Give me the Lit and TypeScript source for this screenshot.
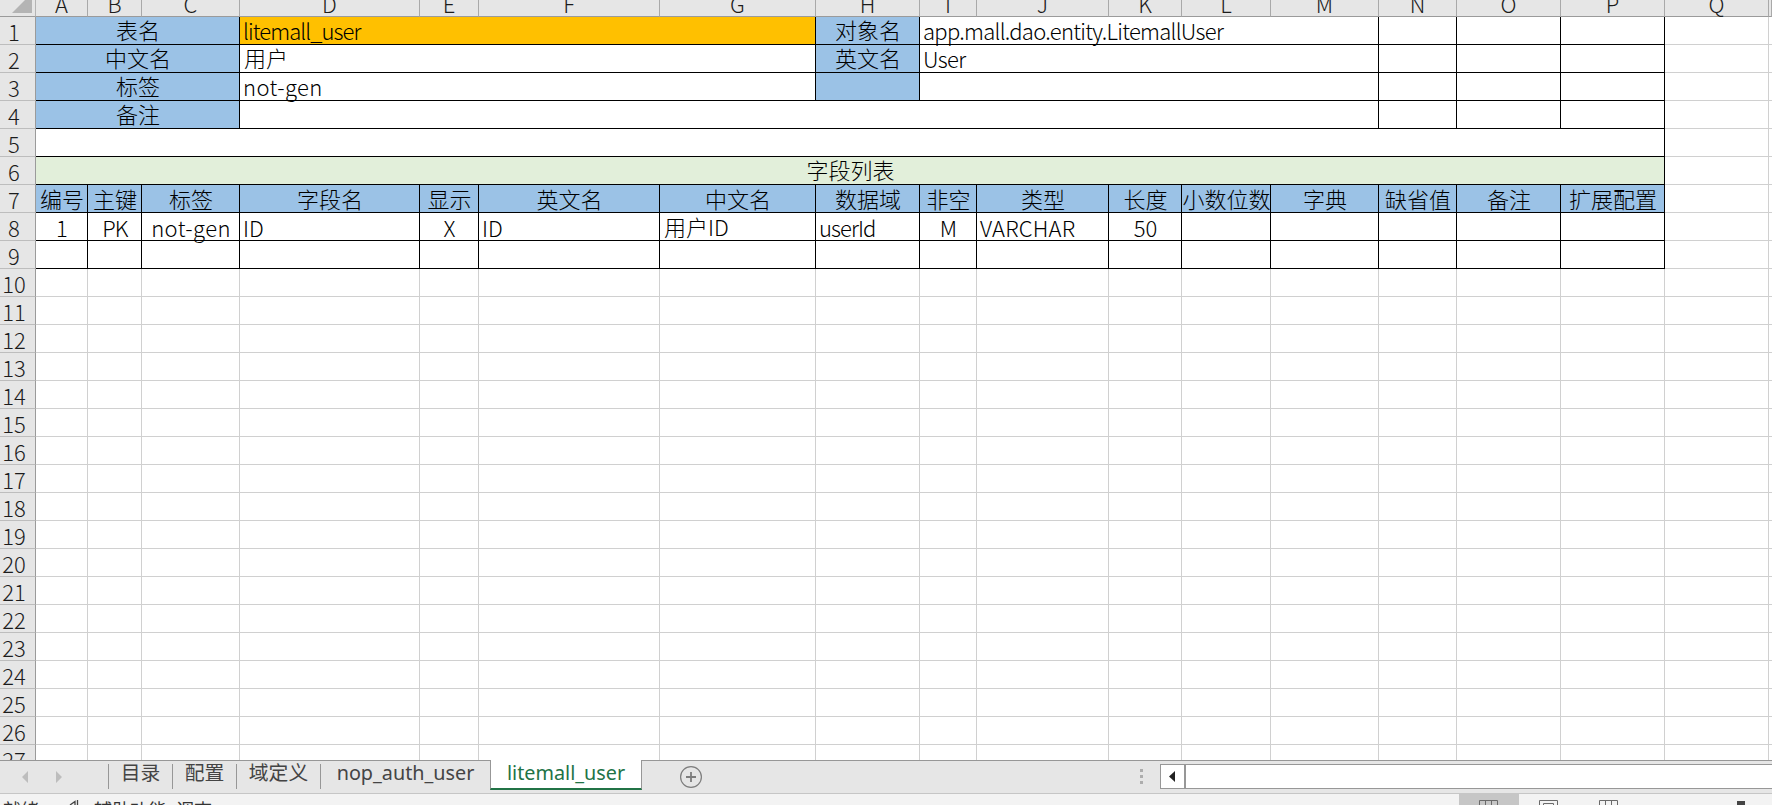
import { LitElement, html, css, nothing } from "lit";
import { customElement } from "lit/decorators.js";

type Cell = { span?: number; text?: string; kind?: string; tone?: string };

const COLS = "ABCDEFGHIJKLMNOPQ".split("");

const label = (text: string, span = 1): Cell => ({ text, span, kind: "blue mid", tone: "han" });
const head = (text: string): Cell => ({ text, kind: "blue mid", tone: "han low" });
const box = (span = 1): Cell => ({ span, kind: "box" });
const plain = (n: number): Cell[] => Array.from({ length: n }, () => ({}));
const boxes = (n: number): Cell[] => Array.from({ length: n }, () => box());
const latin = (text: string, kind: string, span = 1, tone = ""): Cell => ({ text, kind, span, tone: `lat ${tone}` });

const ROWS: Cell[][] = [
  [label("表名", 3), latin("litemall_user", "orange", 4, "up tightest"), label("对象名"), latin("app.mall.dao.entity.LitemallUser", "box", 5, "up tight"), ...boxes(3), ...plain(2)],
  [label("中文名", 3), { text: "用户", span: 4, kind: "box", tone: "han" }, label("英文名"), latin("User", "box", 5, "up tight"), ...boxes(3), ...plain(2)],
  [label("标签", 3), latin("not-gen", "box", 4, "up wide"), label(""), box(5), ...boxes(3), ...plain(2)],
  [label("备注", 3), box(10), ...boxes(3), ...plain(2)],
  [box(16), ...plain(2)],
  [{ text: "字段列表", span: 16, kind: "green mid", tone: "han" }, ...plain(2)],
  [..."编号,主键,标签,字段名,显示,英文名,中文名,数据域,非空,类型,长度,小数位数,字典,缺省值,备注,扩展配置".split(",").map(head), ...plain(2)],
  [
    latin("1", "box mid"), latin("PK", "box mid", 1, "tight"), latin("not-gen", "box mid", 1, "wide"), latin("ID", "box"), latin("X", "box mid"), latin("ID", "box"),
    { text: "用户ID", kind: "box", tone: "han low" }, latin("userId", "box", 1, "snug"), latin("M", "box mid"), latin("VARCHAR", "box", 1, "airy"), latin("50", "box mid"), ...boxes(5), ...plain(2),
  ],
  [...boxes(16), ...plain(2)],
  ...Array.from({ length: 18 }, () => plain(18)),
];

@customElement("sheet-grid")
export class SheetGrid extends LitElement {
  static styles = css`
    :host { display: block; height: 760px; overflow: hidden; background: #fff; }
    .grid {
      display: grid;
      grid-template-columns: 36px 52px 54px 98px 180px 59px 181px 156px 104px 57px 132px 73px 89px 108px 78px 104px 104px 104px 3px;
      grid-template-rows: 17px;
      grid-auto-rows: 28px;
      font: 300 22px/24px "Noto Sans CJK SC", sans-serif;
      color: #000;
    }
    .grid > div { box-sizing: border-box; min-width: 0; white-space: nowrap; }
    .corner, .col { background: #e6e6e6; border-bottom: 1px solid #9b9b9b; }
    .corner { border-right: 1px solid #b4b4b4; display: flex; justify-content: flex-end; padding-right: 3px; }
    .col { border-right: 1px solid #a9a9a9; display: flex; justify-content: center; align-items: flex-end; color: #1c1c1c; }
    .col span { line-height: 24px; margin-bottom: 1px; }
    .num { background: #e6e6e6; border-right: 1px solid #9b9b9b; border-bottom: 1px solid #bdbdbd; padding: 2px 7px 0 0; text-align: center; color: #1c1c1c; }
    .cell { border-right: 1px solid #d0d0d0; border-bottom: 1px solid #d0d0d0; padding-left: 3px; display: flex; align-items: flex-start; }
    .mid { justify-content: center; padding-left: 1px; }
    .box, .blue, .orange, .green { border-color: #000; }
    .blue { background: #9bc2e6; }
    .orange { background: #ffc000; }
    .green { background: #e2efda; }
    .box > .han { padding-left: 1px; }
    .low { padding-top: 1px; }
    .lat { padding-top: 2px; }
    .up { padding-top: 1px; }
    .tight { letter-spacing: -0.72px; }
    .tightest { letter-spacing: -0.9px; }
    .snug { letter-spacing: -0.9px; }
    .airy { letter-spacing: 0.2px; }
    .wide { letter-spacing: 0.4px; }
  `;

  render() {
    return html`<div class="grid">
      <div class="corner"><svg width="20" height="13" viewBox="0 0 20 13"><path d="M20 0V13H0L13 0Z" fill="#b4b4b4" /></svg></div>
      ${COLS.map((c) => html`<div class="col"><span>${c}</span></div>`)}
      <div class="col"></div>
      ${ROWS.map(
        (row, i) => html`<div class="num">${i + 1}</div>
          ${row.map(
            (c) => html`<div class="cell ${c.kind ?? ""}" style=${`grid-column: span ${c.span ?? 1}`}>
              ${c.text ? html`<span class=${c.tone ?? ""}>${c.text}</span>` : nothing}
            </div>`,
          )}`,
      )}
    </div>`;
  }
}

@customElement("sheet-tabs")
export class SheetTabs extends LitElement {
  static styles = css`
    :host { display: flex; height: 34px; box-sizing: border-box; background: #e6e6e6; border-top: 1px solid #979797; border-bottom: 1px solid #c6c6c6;
      font: 19.8px/26px "Noto Sans", "Noto Sans CJK SC", sans-serif; color: #444; }
    .nav { width: 108px; flex: none; }
    .tab { box-sizing: border-box; height: 25px; margin-top: 3px; border-left: 1px solid #979797; text-align: center; white-space: nowrap; flex: none; }
    .tab span { display: block; margin-top: -4px; }
    .t1, .t2 { width: 64px; }
    .t3 { width: 84px; }
    .t4 { width: 170px; }
    .active { box-sizing: border-box; width: 152px; height: 30px; margin-top: -1px; background: #fff; color: #217346; text-align: center;
      border: 1px solid #979797; border-top: 0; border-bottom: 2px solid #217346; flex: none; }
    .add { margin: 4px 0 0 37px; width: 24px; height: 24px; }
    .dots { margin: 8px 0 0 auto; width: 3px; height: 15px; flex: none; }
    .bar { box-sizing: border-box; width: 612px; height: 25px; margin: 3px 0 0 17px; border: 1px solid #979797; border-right: 0; background: #fff; display: flex; flex: none; }
    .left { width: 23px; border-right: 2px solid #979797; }
    svg { display: block; }
  `;

  render() {
    return html`
      <div class="nav"><svg width="108" height="32" viewBox="0 0 108 32"><path d="M28 10V22L22 16ZM56 10V22L62 16Z" fill="#bdbdbd" /></svg></div>
      <div class="tab t1"><span>目录</span></div>
      <div class="tab t2"><span>配置</span></div>
      <div class="tab t3"><span>域定义</span></div>
      <div class="tab t4"><span>nop_auth_user</span></div>
      <div class="active"><span>litemall_user</span></div>
      <svg class="add" viewBox="0 0 24 24" fill="none" stroke="#7d7d7d"><circle cx="12" cy="12" r="10.4" stroke-width="1.2" /><path d="M12 7V17M7 12H17" stroke-width="1.8" /></svg>
      <svg class="dots" viewBox="0 0 3 15"><path d="M0 0H3V3H0ZM0 6H3V9H0ZM0 12H3V15H0Z" fill="#adadad" /></svg>
      <div class="bar"><div class="left"><svg width="23" height="23" viewBox="0 0 23 23"><path d="M14 6V17L8 11.5Z" fill="#222" /></svg></div></div>
    `;
  }
}

@customElement("status-bar")
export class StatusBar extends LitElement {
  static styles = css`
    :host { display: flex; height: 11px; overflow: hidden; background: #f3f3f3; color: #333; font: 18px/24px "Noto Sans CJK SC", sans-serif; white-space: nowrap; }
    .ready { padding-left: 3px; width: 65px; height: 24px; margin-top: 3px; box-sizing: border-box; }
    .acc { width: 29px; height: 24px; flex: none; }
    .access { margin-top: 3px; letter-spacing: 0.15px; }
    .views { margin-left: auto; display: flex; width: 313px; }
    .view { width: 60px; height: 11px; }
    .on { background: #c6c6c6; }
    .thumb { width: 8px; height: 20px; background: #444; margin: 7px 0 0 98px; }
  `;

  render() {
    const grid = html`<svg width="60" height="24" fill="none" stroke="#6a6a6a"><path d="M20.5 24V6.5H38.5V24M26.5 6.5V24M32.5 6.5V24" /></svg>`;
    return html`
      <div class="ready">就绪</div>
      <svg class="acc" viewBox="0 0 29 24" fill="none" stroke="#444" stroke-width="1.3"><path d="M5 11L10 7.5V24M12.5 6V12" /></svg>
      <div class="access">辅助功能: 调查</div>
      <div class="views">
        <div class="view on">${grid}</div>
        <div class="view"><svg width="60" height="24" fill="none" stroke="#6a6a6a"><path d="M20.5 24V6.5H38.5V24M24.5 24V9.5H34.5V24" /></svg></div>
        <div class="view">${grid}</div>
        <div class="thumb"></div>
      </div>
    `;
  }
}

@customElement("app-root")
export class AppRoot extends LitElement {
  static styles = css`
    :host { display: flex; flex-direction: column; width: 1772px; height: 805px; overflow: hidden; background: #fff; }
    sheet-grid, sheet-tabs, status-bar { flex: none; }
  `;

  render() {
    return html`<sheet-grid></sheet-grid><sheet-tabs></sheet-tabs><status-bar></status-bar>`;
  }
}
